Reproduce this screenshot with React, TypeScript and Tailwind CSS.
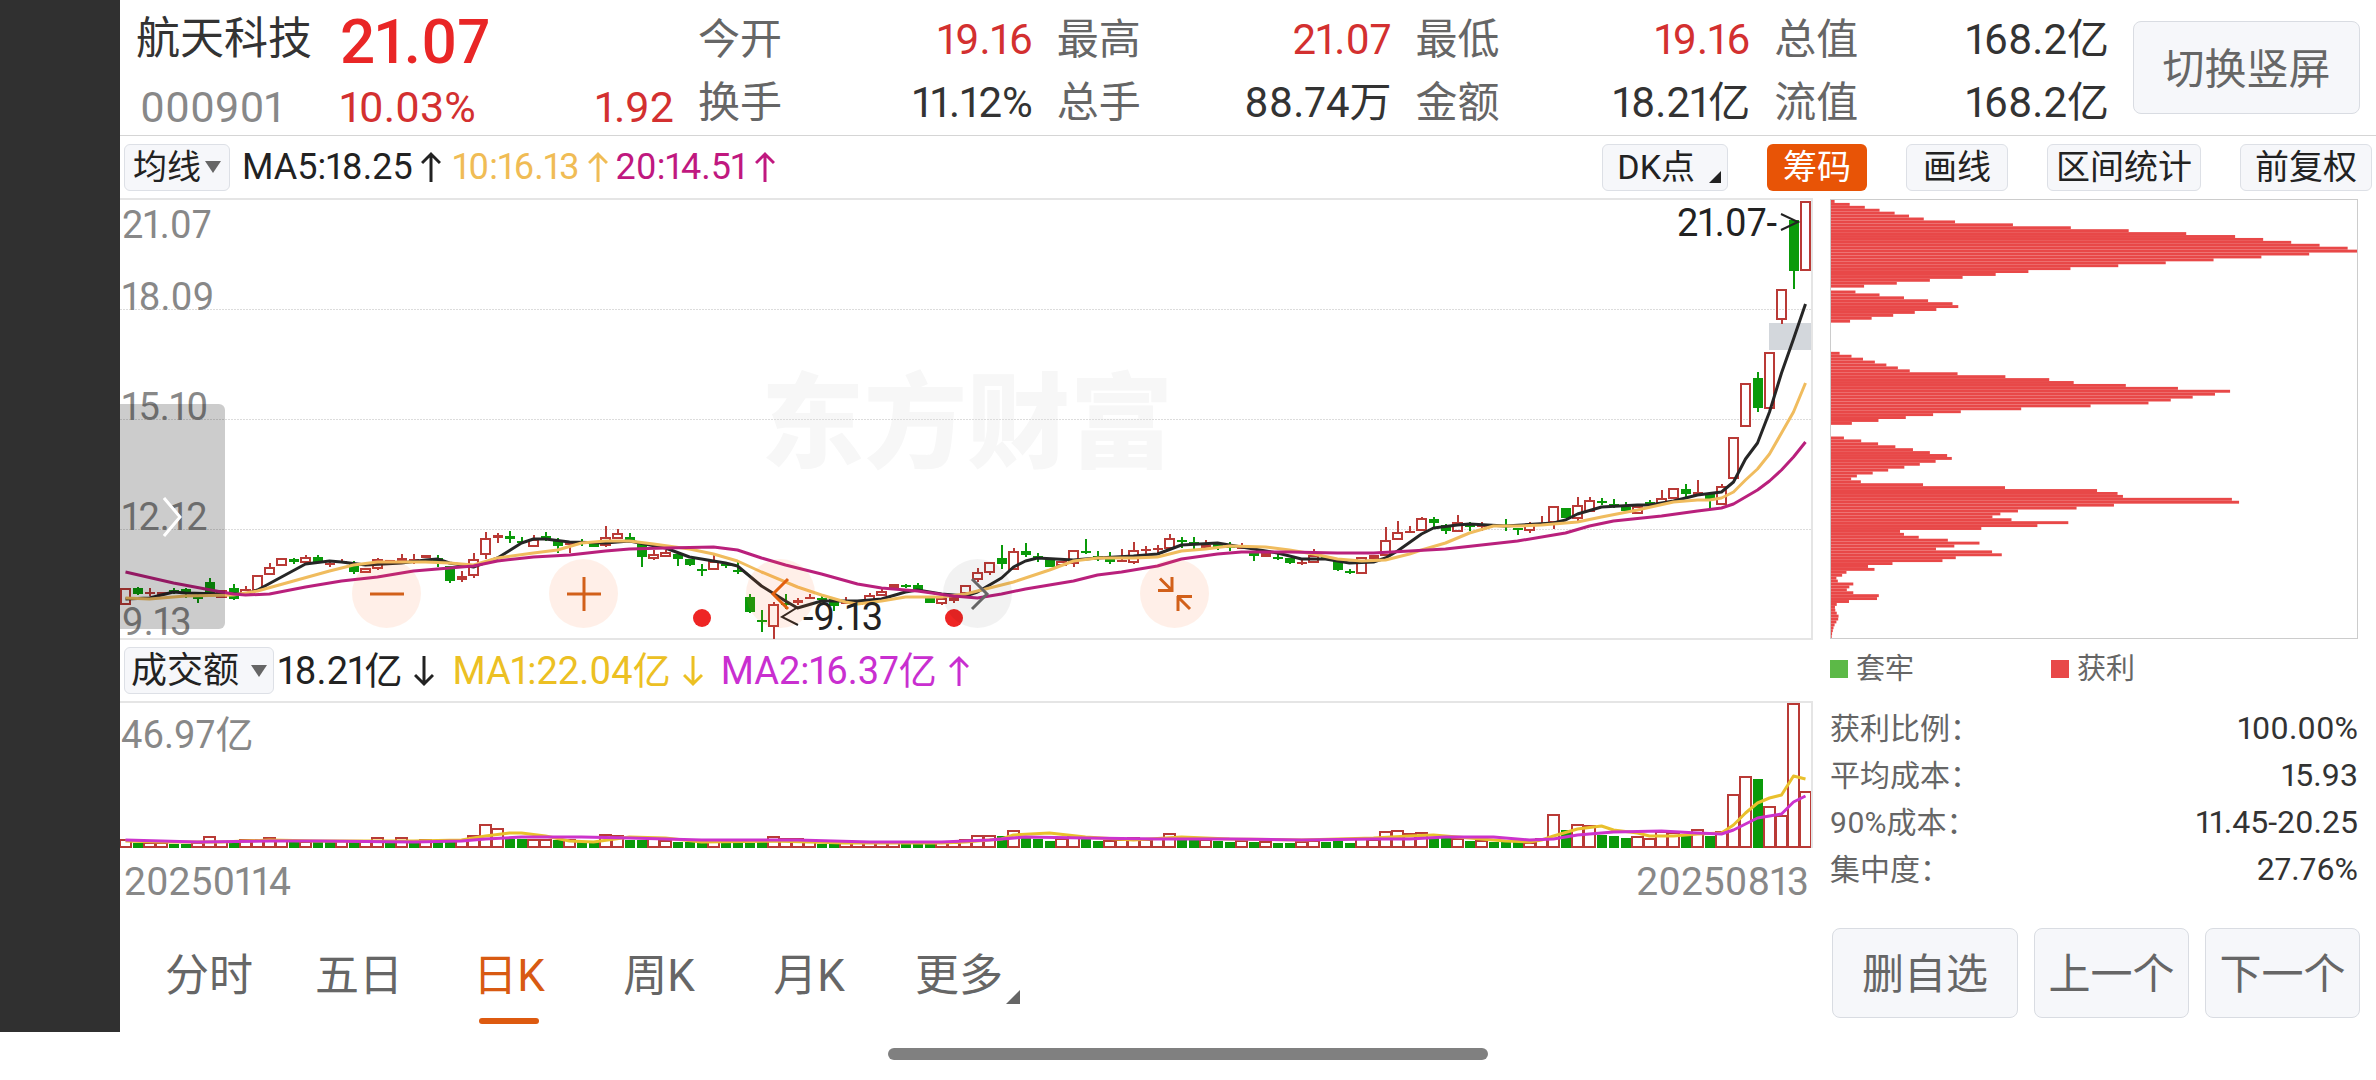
import { clsx } from 'clsx';
import { useState } from 'react';

type Candle = [up: 0 | 1, top: number, bottom: number, high?: number, low?: number];
type Point = [index: number, y: number];

const STEP = 12;
const WIDTH = 1691;

// One entry per trading day, in chart units measured from the top edge
const CANDLES: Candle[] = [
  [1, 388, 405], [0, 388, 394, 387, 395], [1, 392, 394, 388, 396], [1, 392, 395], [0, 390, 392, 388, 394],
  [0, 389, 394, 388, 398], [0, 397, 399, 393, 403], [0, 382, 393, 378, 393], [1, 390, 398], [0, 388, 399, 384, 400],
  [1, 389, 394, 386, 394], [1, 375, 391], [1, 367, 375, 363, 375], [1, 358, 366], [0, 359, 362, 358, 364],
  [1, 357, 363, 355, 363], [0, 357, 362, 355, 362], [1, 363, 364, 361, 367], [1, 361, 363, 359, 363], [0, 363, 372, 361, 374],
  [1, 368, 373], [1, 359, 369, 358, 370], [1, 360, 363], [1, 358, 361, 354, 361], [1, 359, 361, 354, 364],
  [1, 355, 358], [0, 358, 363, 355, 367], [0, 366, 381, 366, 383], [1, 376, 380, 371, 382], [1, 359, 376, 353, 378],
  [1, 338, 355, 332, 359], [1, 335, 338, 333, 343], [0, 336, 339, 331, 343], [0, 341, 342, 337, 343], [1, 339, 347, 335, 347],
  [0, 336, 339, 332, 341], [0, 340, 346, 338, 353], [1, 343, 345, 343, 353], [0, 342, 343, 339, 346], [0, 344, 347],
  [1, 337, 346, 326, 347], [1, 333, 339, 329, 339], [0, 337, 341, 333, 341], [0, 344, 357, 344, 367], [1, 354, 359, 350, 360],
  [1, 352, 357, 350, 357], [0, 354, 359, 354, 366], [0, 359, 365, 359, 366], [0, 369, 370, 364, 376], [1, 361, 370, 355, 370],
  [0, 364, 366, 362, 368], [0, 370, 372, 362, 374], [0, 397, 412, 394, 413], [0, 420, 421, 410, 432], [1, 404, 427, 402, 439],
  [0, 403, 404, 394, 409], [1, 400, 403, 398, 405], [1, 397, 399, 394, 399], [0, 398, 399, 395, 402], [0, 399, 406, 399, 411],
  [1, 402, 404, 397, 404], [1, 401, 405], [1, 395, 403, 393, 403], [1, 391, 396, 389, 396], [1, 384, 388],
  [0, 385, 386, 384, 388], [0, 385, 391, 383, 391], [0, 396, 403], [1, 398, 404, 398, 405], [1, 397, 401, 397, 403],
  [1, 385, 394], [1, 372, 380, 368, 382], [1, 362, 373, 362, 375], [0, 358, 364, 345, 369], [1, 351, 370, 348, 370],
  [0, 351, 355, 343, 357], [0, 356, 358, 353, 362], [0, 359, 367], [1, 361, 366], [1, 350, 364, 350, 367],
  [0, 351, 352, 339, 354], [0, 356, 359, 351, 361], [0, 359, 362, 352, 364], [1, 360, 362, 349, 362], [1, 350, 363, 342, 364],
  [1, 349, 350, 346, 354], [1, 348, 350, 345, 353], [1, 338, 349, 334, 349], [0, 340, 341, 337, 348], [0, 342, 344, 337, 349],
  [1, 345, 348, 340, 348], [0, 344, 348, 343, 350], [0, 346, 348, 342, 351], [1, 347, 349, 343, 349], [0, 353, 356, 353, 361],
  [1, 353, 357], [0, 357, 359, 354, 360], [0, 358, 363, 358, 364], [1, 362, 364, 359, 365], [1, 355, 363, 349, 363],
  [0, 357, 358], [0, 359, 370, 359, 371], [0, 371, 372, 369, 374], [1, 357, 374], [1, 355, 359],
  [1, 340, 356, 327, 356], [1, 332, 340, 321, 340], [1, 331, 332, 326, 332], [1, 318, 331, 317, 331], [0, 319, 323, 317, 328],
  [0, 325, 331, 324, 334], [1, 322, 332, 315, 332], [0, 324, 327, 322, 331], [1, 324, 327, 322, 331], [1, 325, 326],
  [0, 325, 326, 319, 331], [0, 328, 330, 328, 335], [1, 324, 331, 322, 333], [1, 323, 324, 316, 324], [1, 306, 323, 306, 329],
  [0, 308, 318], [1, 305, 319, 297, 323], [1, 300, 312, 297, 312], [0, 301, 302, 298, 305], [0, 304, 306, 299, 308],
  [0, 307, 311, 302, 311], [1, 306, 314], [0, 302, 305, 300, 305], [1, 298, 304, 290, 304], [1, 288, 299],
  [0, 289, 294, 284, 298], [1, 292, 295, 280, 295], [0, 294, 299, 294, 308], [1, 286, 305, 284, 305], [1, 237, 279],
  [1, 183, 227], [0, 178, 208, 172, 212], [1, 152, 209], [1, 89, 120, 89, 124], [0, 20, 71, 20, 89], [1, 1, 71],
];

const MA5: Point[] = [
  [0, 399], [2, 398], [4, 392], [5, 393], [8, 394], [10, 394], [11, 390], [13, 377], [15, 364], [17, 361], [18, 362],
  [20, 365], [23, 363], [25, 360], [26, 359], [27, 363], [29, 367], [31, 358], [33, 343], [34, 339], [35, 339], [37, 342],
  [40, 343], [42, 341], [45, 348], [47, 357], [50, 363], [51, 366], [53, 386], [55, 401], [56, 408], [58, 401], [61, 401],
  [63, 399], [65, 392], [66, 390], [68, 394], [70, 396], [71, 392], [73, 378], [74, 367], [75, 361], [76, 358], [79, 360],
  [81, 358], [84, 356], [86, 354], [88, 345], [91, 343], [93, 347], [96, 353], [98, 359], [100, 359], [102, 363], [104, 362],
  [105, 358], [106, 351], [108, 334], [109, 328], [111, 325], [112, 324], [115, 326], [119, 323], [120, 320], [121, 314],
  [123, 307], [126, 305], [127, 305], [129, 301], [131, 295], [133, 292], [134, 282], [135, 259], [136, 243], [137, 212],
  [138, 173], [139, 139], [140, 104],
];

const MA10: Point[] = [
  [0, 398], [2, 399], [5, 396], [9, 395], [11, 391], [14, 381], [17, 371], [19, 365], [21, 362], [25, 362], [27, 363],
  [29, 365], [31, 358], [34, 353], [36, 350], [38, 343], [40, 341], [42, 341], [44, 344], [47, 349], [49, 354], [51, 361],
  [53, 372], [56, 387], [58, 395], [60, 402], [61, 404], [63, 401], [65, 397], [68, 397], [70, 394], [72, 388], [74, 382],
  [77, 370], [79, 361], [81, 358], [84, 358], [86, 357], [88, 351], [90, 349], [92, 346], [95, 347], [97, 350], [99, 354],
  [101, 359], [103, 361], [105, 360], [107, 354], [108, 350], [110, 343], [112, 333], [114, 326], [116, 326], [118, 325],
  [121, 322], [123, 317], [126, 310], [129, 302], [131, 300], [132, 300], [133, 298], [134, 292], [135, 280], [136, 269],
  [137, 254], [138, 233], [139, 212], [140, 183],
];

const MA20: Point[] = [
  [0, 372], [4, 383], [8, 392], [9, 394], [10, 395], [12, 394], [15, 387], [18, 381], [21, 377], [24, 371], [26, 369],
  [29, 366], [31, 361], [34, 357], [37, 355], [40, 351], [42, 349], [45, 348], [49, 347], [51, 350], [53, 358], [55, 365],
  [58, 374], [61, 384], [63, 388], [66, 391], [69, 396], [71, 398], [73, 394], [75, 389], [77, 385], [79, 381], [81, 375],
  [83, 372], [86, 366], [88, 359], [91, 354], [93, 352], [97, 352], [101, 353], [104, 353], [107, 351], [110, 349],
  [113, 345], [116, 341], [119, 335], [120, 333], [122, 326], [124, 321], [128, 316], [131, 311], [133, 308], [134, 304],
  [135, 297], [136, 290], [137, 281], [138, 270], [139, 257], [140, 242],
];

// Turnover per day, negative for a falling day
const VOLUMES: number[] = [
  8, -5, 5, 5, -4, -4, 5, 11, 6, -5, 8, 8, 10, 8, -6, 6, -6, -6, 7, -6, 7, 10, -7, 10, -6, 8, -6, -6, 7, 12,
  23, 19, -9, -9, 8, 8, -8, 8, -6, -6, 13, 12, -8, -8, 10, 7, -6, -6, -5, 8, -5, -5, -5, -7, 11, 9, 9, 8, -4, -4,
  5, 5, 5, 5, 5, -4, -4, -4, 5, 5, 8, 12, 12, -12, 17, -12, -9, -7, 9, 11, -9, -7, 7, 8, 10, 8, 9, 14, -9, -8,
  8, -7, -6, 7, -6, 6, -5, -5, 6, 7, -6, -7, -5, 9, 8, 16, 17, 14, 15, -10, -10, 9, -7, 7, -6, -6, -6, 5, 9, 33,
  -18, 23, 22, -13, -12, -10, 11, 9, 16, 15, -12, 18, -12, 16, 53, 71, -69, 41, 32, 144, 56,
];

const VOL_MA1: Point[] = [
  [0, 7], [3, 6], [8, 6], [12, 8], [16, 7], [24, 7], [28, 8], [30, 12], [32, 15], [33, 15], [35, 12], [37, 7], [39, 6],
  [42, 11], [45, 10], [48, 6], [54, 7], [60, 5], [68, 5], [70, 6], [73, 9], [74, 13], [77, 15], [80, 11], [84, 8], [88, 11],
  [92, 9], [98, 8], [104, 10], [107, 12], [109, 13], [111, 11], [113, 9], [115, 7], [117, 6], [118, 8], [119, 12],
  [121, 19], [123, 22], [124, 18], [126, 15], [127, 12], [129, 12], [131, 14], [133, 15], [134, 23], [135, 35], [136, 45],
  [137, 50], [138, 53], [139, 72], [140, 69],
];

const VOL_MA2: Point[] = [
  [0, 8], [6, 6], [12, 7], [16, 7], [24, 6], [28, 7], [30, 9], [33, 11], [38, 11], [42, 10], [48, 8], [56, 8], [62, 6],
  [68, 6], [72, 8], [75, 11], [80, 10], [86, 9], [92, 9], [98, 8], [104, 9], [107, 9], [110, 11], [114, 11], [117, 8],
  [119, 9], [121, 13], [124, 16], [128, 17], [131, 15], [133, 14], [134, 18], [135, 24], [136, 30], [137, 32], [138, 34],
  [139, 46], [140, 52],
];

// Cost distribution from the highest price down to the lowest
const CHIPS: number[] = [
  10, 52, 94, 135, 177, 217, 258, 345, 506, 667, 828, 988, 1124, 1202, 1280, 1359, 1437, 1463, 1330, 1197, 1064, 931, 799,
  666, 549, 458, 366, 275, 183, 92, 0, 68, 135, 203, 270, 338, 354, 293, 233, 173, 113, 53, 0, 0, 0, 0, 0, 0, 0, 0, 0, 0,
  24, 57, 89, 122, 154, 186, 219, 352, 485, 607, 675, 820, 965, 1110, 1068, 1006, 945, 883, 722, 529, 361, 284, 208, 132,
  58, 0, 0, 0, 0, 36, 84, 131, 179, 228, 275, 323, 336, 291, 247, 204, 159, 116, 72, 56, 83, 256, 484, 740, 797, 812, 1115,
  1135, 787, 683, 520, 471, 449, 502, 660, 574, 418, 192, 203, 244, 325, 413, 343, 292, 448, 475, 347, 310, 171, 103, 121,
  43, 31, 15, 19, 62, 51, 44, 62, 133, 128, 50, 16, 11, 12, 16, 21, 20, 15, 10, 7, 5, 3, 2,
];

const QUOTES = [
  { label: '今开', value: '19.16', red: true },
  { label: '最高', value: '21.07', red: true },
  { label: '最低', value: '19.16', red: true },
  { label: '总值', value: '168.2亿', red: false },
  { label: '换手', value: '11.12%', red: false },
  { label: '总手', value: '88.74万', red: false },
  { label: '金额', value: '18.21亿', red: false },
  { label: '流值', value: '168.2亿', red: false },
];

const CHIP_STATS = [
  ['获利比例：', '100.00%'],
  ['平均成本：', '15.93'],
  ['90%成本：', '11.45-20.25'],
  ['集中度：', '27.76%'],
];

const TABS = ['分时', '五日', '日K', '周K', '月K', '更多'];

const TOOL_BUTTON = 'h-[47px] rounded-md border border-[#dde0e6] bg-[#f6f7fa] text-[34px] leading-none text-[#222]';
const GREY_BUTTON = 'rounded-lg border border-[#d9dce2] bg-[#f6f7fa] text-[42px] leading-none text-[#666]';

function toPoints(points: Point[], base?: number): string {
  return points.map(([i, y]) => `${5.5 + i * STEP},${base === undefined ? y : base - y}`).join(' ');
}

function Arrow({ down = false }: { down?: boolean }) {
  return (
    <svg viewBox="0 0 20 32" className={clsx('h-8 w-5 shrink-0', down && 'rotate-180')} fill="none" stroke="currentColor" strokeWidth="3">
      <path d="M10 31V3M1 12l9-9 9 9" />
    </svg>
  );
}

function CandleShape({ index, candle }: { index: number; candle: Candle }) {
  const [up, top, bottom, high = top, low = bottom] = candle;
  const x = index * STEP;
  const height = Math.max(bottom - top, 2);
  const color = up ? '#b93a36' : '#0a9a0a';

  return (
    <g fill={color}>
      {high < top && <rect x={x + 5} y={high} width="2" height={top - high} />}
      {low > bottom && <rect x={x + 5} y={bottom} width="2" height={low - bottom} />}
      {up && height > 4 ? (
        <rect x={x + 1} y={top + 1} width="9" height={height - 2} fill="none" stroke={color} strokeWidth="2" />
      ) : (
        <rect x={x + 1} y={top} width="10" height={height} />
      )}
    </g>
  );
}

function PriceChart() {
  return (
    <svg viewBox={`0 0 ${WIDTH} 438`} className="block h-auto w-full overflow-visible" fill="none">
      <text x="641" y="260" fontSize="103" fontWeight="900" fill="#f7f7f7">东方财富</text>
      {[109, 219, 329].map(y => (
        <line key={y} x1="0" x2={WIDTH} y1={y + 0.5} y2={y + 0.5} stroke="#dcdcdc" strokeDasharray="2 1" />
      ))}
      <g fontSize="38" fill="#888">
        <text x="2" y="38">21.07</text>
        <text x="2" y="110">18.09</text>
        <text x="2" y="220">15.10</text>
        <text x="2" y="330">12.12</text>
        <text x="2" y="435">9.13</text>
      </g>
      <rect x="1649" y="123" width="42" height="27" fill="#d3d7dc" />
      <g shapeRendering="crispEdges">
        {CANDLES.map((candle, i) => (
          <CandleShape key={i} index={i} candle={candle} />
        ))}
      </g>
      <g strokeWidth="3" strokeLinejoin="round">
        <polyline points={toPoints(MA5)} stroke="#262626" />
        <polyline points={toPoints(MA10)} stroke="#f0bc5e" />
        <polyline points={toPoints(MA20)} stroke="#b9207c" />
      </g>
      <circle cx="582" cy="418" r="9" fill="#ee2524" />
      <circle cx="834" cy="418" r="9" fill="#ee2524" />
      <g fontSize="38" fill="#222">
        <text x="683" y="430">-9.13</text>
        <text x="1657" y="36" textAnchor="end">21.07-</text>
      </g>
      <path d="M678 407l-16 10 16 8M1661 14l17 8-17 8" stroke="#222" strokeWidth="2" />
    </svg>
  );
}

function VolumeChart() {
  return (
    <svg viewBox={`0 0 ${WIDTH} 145`} className="block h-auto w-full" fill="none">
      <text x="1" y="45" fontSize="38" fill="#888">46.97亿</text>
      <g shapeRendering="crispEdges">
        {VOLUMES.map((v, i) =>
          v > 0 ? (
            <rect key={i} x={i * STEP} y={145 - v} width="11" height={v - 1} stroke="#b93a36" strokeWidth="2" />
          ) : (
            <rect key={i} x={i * STEP + 1} y={145 + v} width="10" height={-v} fill="#0a9a0a" />
          )
        )}
      </g>
      <g strokeWidth="3" strokeLinejoin="round">
        <polyline points={toPoints(VOL_MA1, 145)} stroke="#e9c02c" />
        <polyline points={toPoints(VOL_MA2, 145)} stroke="#cc33cc" />
      </g>
    </svg>
  );
}

function ChartControls() {
  const round = 'flex size-[69px] items-center justify-center rounded-full';
  return (
    <div className="absolute bottom-[10px] left-[232px] flex gap-32">
      <button aria-label="缩小" className={clsx(round, 'bg-[#ff6414]/10 text-[#d2601a]')}>
        <svg className="size-9" viewBox="0 0 36 36" stroke="currentColor" strokeWidth="3"><path d="M1 18h34" /></svg>
      </button>
      <button aria-label="放大" className={clsx(round, 'bg-[#ff6414]/10 text-[#d2601a]')}>
        <svg className="size-9" viewBox="0 0 36 36" stroke="currentColor" strokeWidth="3"><path d="M1 18h34M18 1v34" /></svg>
      </button>
      <button aria-label="左移" className={clsx(round, 'bg-[#ff6414]/10 text-[#e2600f]')}>
        <svg className="size-9" viewBox="0 0 36 36" fill="none" stroke="currentColor" strokeWidth="3"><path d="M25 3L10 18l15 15" /></svg>
      </button>
      <button aria-label="右移" className={clsx(round, 'bg-black/5 text-[#666]')}>
        <svg className="size-9" viewBox="0 0 36 36" fill="none" stroke="currentColor" strokeWidth="3"><path d="M12 3l15 15-15 15" /></svg>
      </button>
      <button aria-label="收起" className={clsx(round, 'bg-[#ff6414]/10 text-[#d2601a]')}>
        <svg className="size-9" viewBox="0 0 36 36" fill="none" stroke="currentColor" strokeWidth="3">
          <path d="M3 2.500l12 12M1 14.500h15M15 1v15M33 33L21 21M35 20.500H20M21 20v15" />
        </svg>
      </button>
    </div>
  );
}

function Header() {
  return (
    <header className="flex h-[136px] items-start border-b border-[#d5d5d5] pr-4">
      <div className="grid w-[578px] grid-cols-[204px_1fr] pt-2 pr-6 pl-4">
        <h1 className="text-[44px] leading-[62px] text-[#333]">航天科技</h1>
        <span className="text-[62px] leading-[68px] font-medium text-[#e92626]">21.07</span>
        <span className="pl-1 text-[43px] leading-[62px] text-[#888]">000901</span>
        <span className="flex justify-between text-[43px] leading-[62px] text-[#d33030]">
          <span>10.03%</span>
          <span>1.92</span>
        </span>
      </div>
      <dl className="grid flex-1 grid-cols-4 pt-2">
        {QUOTES.map(({ label, value, red }) => (
          <div key={label} className="flex justify-between pr-6 text-[42px] leading-[63px]">
            <dt className="text-[#666]">{label}</dt>
            <dd className={red ? 'text-[#d33030]' : 'text-[#333]'}>{value}</dd>
          </div>
        ))}
      </dl>
      <button className={clsx(GREY_BUTTON, 'mt-[21px] h-[93px] w-[227px] pt-1')}>切换竖屏</button>
    </header>
  );
}

function Toolbar() {
  return (
    <div className="flex h-[62px] items-center justify-between px-1">
      <div className="flex items-center gap-2 text-[36px] leading-none">
        <button className={clsx(TOOL_BUTTON, 'flex items-center gap-1 px-2')}>
          均线
          <svg className="h-3 w-4" viewBox="0 0 16 12" fill="#666"><path d="M0 0h16L8 12z" /></svg>
        </button>
        <span className="flex items-center gap-2 pl-1 text-[#222]">MA5:18.25<Arrow /></span>
        <span className="flex items-center gap-2 pl-1 text-[#f0bc55]">10:16.13<Arrow /></span>
        <span className="flex items-center gap-2 text-[#c0187f]">20:14.51<Arrow /></span>
      </div>
      <div className="flex items-center gap-[39px]">
        <button className={clsx(TOOL_BUTTON, 'flex items-center gap-[14px] pr-[6px] pl-[14px]')}>
          DK点
          <svg className="mt-5 size-3" viewBox="0 0 12 12" fill="#222"><path d="M12 0v12H0z" /></svg>
        </button>
        <button className="h-[47px] rounded-md bg-[#e85406] px-4 text-[34px] leading-none text-white">筹码</button>
        <button className={clsx(TOOL_BUTTON, 'px-4')}>画线</button>
        <button className={clsx(TOOL_BUTTON, 'px-2')}>区间统计</button>
        <button className={clsx(TOOL_BUTTON, 'px-[14px]')}>前复权</button>
      </div>
    </div>
  );
}

function ChipPanel() {
  return (
    <aside className="pt-px">
      <div className="border border-[#ccc]">
        <svg viewBox="0 0 1463 150" preserveAspectRatio="none" className="block h-[438px] w-full" fill="#e84848">
          {CHIPS.map((value, i) => value > 0 && <rect key={i} x="0" y={i} width={value} height="1" />)}
        </svg>
      </div>
      <div className="grid h-[60px] grid-cols-[221px_1fr] items-center text-[29px] leading-none text-[#666]">
        <span className="flex items-center gap-2"><i className="size-[18px] bg-[#5cb947]" />套牢</span>
        <span className="flex items-center gap-2"><i className="size-[18px] bg-[#e84848]" />获利</span>
      </div>
      <dl className="pt-[6px] leading-[47px]">
        {CHIP_STATS.map(([label, value]) => (
          <div key={label} className="flex justify-between">
            <dt className="text-[30px] text-[#666]">{label}</dt>
            <dd className="text-[32px] text-[#333]">{value}</dd>
          </div>
        ))}
      </dl>
    </aside>
  );
}

export default function App() {
  const [tab, setTab] = useState('日K');

  return (
    <div className="flex min-h-screen flex-col bg-white font-[Roboto,'Noto_Sans_CJK_SC',sans-serif] proportional-nums">
      <div className="flex flex-1">
        <div className="w-[120px] shrink-0 bg-[#303030]" />
        <main className="flex min-w-0 flex-1 flex-col">
          <Header />
          <Toolbar />

          <div className="grid grid-cols-[1fr_528px] gap-[17px] pr-[18px]">
            <section className="min-w-0">
              <div className="relative border-y-2 border-r-2 border-[#e5e5e5]">
                <PriceChart />
                <ChartControls />
                <button aria-label="展开" className="absolute bottom-[9px] left-0 flex h-[225px] w-[105px] items-center justify-center rounded-r-md bg-black/20">
                  <svg className="h-10 w-5" viewBox="0 0 20 40" fill="none" stroke="#fff" strokeWidth="3"><path d="M1 1l16 19L1 39" /></svg>
                </button>
              </div>

              <div className="flex h-[61px] items-center gap-1 pl-1 text-[38px] leading-none">
                <button className={clsx(TOOL_BUTTON, 'flex items-center gap-3 px-[6px]')}>
                  <span className="text-[36px]">成交额</span>
                  <svg className="h-3 w-4" viewBox="0 0 16 12" fill="#666"><path d="M0 0h16L8 12z" /></svg>
                </button>
                <div className="flex gap-[18px]">
                  <span className="flex items-center gap-3 text-[#222]">18.21亿<Arrow down /></span>
                  <span className="flex items-center gap-3 text-[#ecc023]">MA1:22.04亿<Arrow down /></span>
                  <span className="flex items-center gap-3 text-[#c92fd0]">MA2:16.37亿<Arrow /></span>
                </div>
              </div>

              <div className="border-t-2 border-r-2 border-[#e5e5e5]">
                <VolumeChart />
              </div>
              <div className="flex justify-between pt-2 pr-1 pl-1 text-[39px] leading-[52px] text-[#888]">
                <time>20250114</time>
                <time>20250813</time>
              </div>
            </section>
            <ChipPanel />
          </div>

          <div className="mt-auto flex h-[104px] items-start justify-between pr-4">
            <nav className="ml-[14px] grid w-[900px] grid-cols-6">
              {TABS.map(name => (
                <button
                  key={name}
                  onClick={() => setTab(name)}
                  className={clsx('relative flex h-24 items-center justify-center text-[44px] leading-none', tab === name ? 'text-[#d85a12]' : 'text-[#666]')}
                >
                  {name}
                  {tab === name && <span className="absolute bottom-0 h-[6px] w-[60px] rounded-full bg-[#dd5a10]" />}
                  {name === '更多' && (
                    <svg className="absolute right-[14px] bottom-5 size-[14px]" viewBox="0 0 14 14" fill="#666"><path d="M14 0v14H0z" /></svg>
                  )}
                </button>
              ))}
            </nav>
            <div className="flex gap-4">
              <button className={clsx(GREY_BUTTON, 'h-[90px] w-[186px] pt-1')}>删自选</button>
              <button className={clsx(GREY_BUTTON, 'h-[90px] w-[155px] pt-1')}>上一个</button>
              <button className={clsx(GREY_BUTTON, 'h-[90px] w-[155px] pt-1')}>下一个</button>
            </div>
          </div>
        </main>
      </div>
      <footer className="flex h-12 justify-center pt-4">
        <div className="h-3 w-[600px] rounded-full bg-[#808080]" />
      </footer>
    </div>
  );
}
